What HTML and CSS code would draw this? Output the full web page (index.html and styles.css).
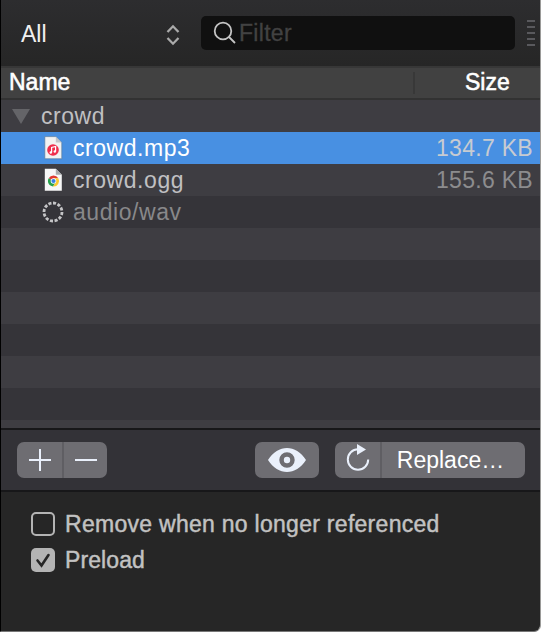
FILE: index.html
```html
<!DOCTYPE html>
<html lang="en">
<head>
<meta charset="utf-8">
<title>Sounds</title>
<link rel="stylesheet" href="styles.css">
</head>
<body>
<main class="window">
  <header class="topbar">
    <div class="scope"><span class="scope-label">All</span>
      <svg width="14" height="22" viewBox="0 0 14 22"><path d="M1.5 8 7 2.3 12.5 8M1.5 14 7 19.7 12.5 14"/></svg>
    </div>
    <div class="filter">
      <svg width="24" height="24" viewBox="0 0 24 24"><circle cx="10" cy="10" r="8.3"/><path d="m16 16 6 6"/></svg>
      <span class="placeholder">Filter</span>
    </div>
    <div class="grip"><i></i><i></i><i></i><i></i><i></i></div>
  </header>
  <div class="columns"><span class="col-name">Name</span><span class="col-size">Size</span></div>
  <section class="list">
    <div class="row group">
      <svg class="disclosure" width="18" height="15" viewBox="0 0 18 15"><path d="M0 0h18L9 15z"/></svg>
      <span class="name">crowd</span>
    </div>
    <div class="row selected">
      <svg class="file" width="20" height="24" viewBox="0 0 20 24">
        <path d="M1.8.6h11l6 6v16.2h-17z" fill="#f2f2f2" stroke="#587b9e" stroke-width=".7"/>
        <path d="m12.8.8 5.8 5.8h-5.8z" fill="#c2c6ca"/>
        <circle cx="10" cy="14" r="5.8" fill="#ef2e4c"/>
        <path d="M8.6 16.5v-5l4-1v5" fill="none" stroke="#fff" stroke-width="1.2"/><circle cx="7.8" cy="16.5" r="1.2" fill="#fff"/><circle cx="11.8" cy="15.5" r="1.2" fill="#fff"/>
      </svg>
      <span class="name">crowd.mp3</span><span class="size">134.7 KB</span>
    </div>
    <div class="row">
      <svg class="file" width="20" height="24" viewBox="0 0 20 24">
        <path d="M1.8.8h11l6 6v16h-17z" fill="#f7f7f7"/>
        <path d="m12.8.8 6 6h-6z" fill="#a9abad"/>
        <path d="M10.5 13 5.7 10.2a5.5 5.5 0 0 1 9.6 0h-4.8z" fill="#e03a30"/>
        <path d="M10.5 13 5.7 10.2A5.5 5.5 0 0 0 10 18.5L13 14z" fill="#27a14c"/>
        <path d="M10.5 10.2h4.8A5.5 5.5 0 0 1 10 18.5l3-4.5z" fill="#fbc92e"/>
        <circle cx="10.5" cy="13" r="2.8" fill="#fff"/><circle cx="10.5" cy="13" r="2.1" fill="#397fe2"/>
      </svg>
      <span class="name">crowd.ogg</span><span class="size">155.6 KB</span>
    </div>
    <div class="row missing">
      <svg class="file" width="20" height="22" viewBox="0 0 20 22"><circle cx="10" cy="11" r="9" pathLength="60" fill="none" stroke="#c4c4c6" stroke-width="2.8" stroke-dasharray="3.3 1.7"/></svg>
      <span class="name">audio/wav</span>
    </div>
    <div class="row"></div><div class="row"></div><div class="row"></div><div class="row"></div><div class="row"></div><div class="row"></div><div class="row"></div>
  </section>
  <div class="actions">
    <div class="button"><span class="part add"><svg width="22" height="22" viewBox="0 0 22 22"><path d="M0 11h22M11 0v22"/></svg></span><span class="part remove"><svg width="22" height="22" viewBox="0 0 22 22"><path d="M0 11h22"/></svg></span></div>
    <div class="button preview"><svg width="38" height="24" viewBox="0 0 38 24"><path fill="#eaf0fb" fill-rule="evenodd" d="M0 12C5 4 12 0 19 0s14 4 19 12c-5 8-12 12-19 12S5 20 0 12zM19 4.3a7.7 7.7 0 1 0 0 15.4 7.7 7.7 0 0 0 0-15.4z"/><circle cx="19" cy="12" r="3.2" fill="#eaf0fb"/></svg></div>
    <div class="button"><span class="part reload"><svg width="24" height="27" viewBox="0 0 24 27"><path d="M12 5.3A10.2 10.2 0 1 0 22.2 15.5" fill="none"/><path class="arrow" d="M11 0v11l9-5.5z"/></svg></span><span class="part replace">Replace…</span></div>
  </div>
  <section class="options">
    <div class="option"><span class="box"></span><span class="label-remove">Remove when no longer referenced</span></div>
    <div class="option"><span class="box checked"><svg width="24" height="24" viewBox="0 0 24 24"><path d="m6.5 12.5 4 5L17.5 7"/></svg></span><span class="label-preload">Preload</span></div>
  </section>
</main>
</body>
</html>
```

FILE: styles.css
```css
* { box-sizing: border-box; }
body { margin: 0; background: #fff; font: 23px/32px "Liberation Sans", Arial, sans-serif; }
svg { display: block; flex: none; overflow: visible; }
.window { width: 541px; height: 632px; overflow: hidden; background: #262626; border-left: 1px solid #000; border-right: 1px solid #9a9a98; border-bottom: 1px solid #777; border-bottom-right-radius: 7px; white-space: nowrap; }
.topbar { height: 66px; display: flex; align-items: center; background: linear-gradient(#2d2d2f, #262626); }
.scope { width: 200px; height: 66px; padding: 3px 21px 0 20px; display: flex; align-items: center; justify-content: space-between; color: #f0f0f0; }
.scope-label { padding-bottom: 2px; }
.scope svg { fill: none; stroke: #aaa; stroke-width: 2.3; }
.filter { width: 314px; height: 34px; border-radius: 5px; background: #101010; padding-left: 12px; display: flex; align-items: center; gap: 1px; }
.filter svg { fill: none; stroke: #c4c4c4; stroke-width: 1.8; }
.placeholder { color: #424242; letter-spacing: .3px; padding-left: 1px; -webkit-text-stroke: .3px; }
.grip { margin-left: 12px; display: grid; gap: 4px; }
.grip i { width: 8px; height: 2px; background: #59595d; }
.columns { height: 34px; border-top: 2px solid #373737; border-bottom: 2px solid #323232; background: #414141; display: flex; align-items: center; color: #fff; line-height: 30px; -webkit-text-stroke: .55px; }
.col-name { width: 412px; padding: 0 0 2px 8px; }
.col-size { height: 22px; line-height: 20px; border-left: 2px solid #383838; padding-left: 50px; }
.list { height: 328px; overflow: hidden; }
.row { height: 32px; line-height: 30px; display: flex; align-items: center; background: #3e3d42; padding: 0 7px 0 42px; color: #c0c0c2; }
.row:nth-child(even) { background: #353439; }
.row.group { padding-left: 11px; }
.disclosure { fill: #646468; margin-right: 11px; }
.file { margin-right: 10px; }
.name { letter-spacing: .55px; padding-bottom: 1px; }
.size { margin-left: auto; letter-spacing: .3px; padding-bottom: 1px; color: #8c8c8e; }
.row.selected { background: #4890e2; color: #fff; }
.selected .size { color: #c7cbd1; }
.missing .name { color: #88888a; }
.actions { height: 64px; border-top: 2px solid #171719; border-bottom: 2px solid #171719; background: #333237; padding: 0 15px 0 16px; display: flex; align-items: center; }
.button { height: 36px; border-radius: 7px; background: #6e6d72; display: flex; align-items: center; overflow: hidden; }
.button svg { stroke: #eaf0fb; stroke-width: 2; }
.preview { width: 64px; justify-content: center; margin-left: auto; margin-right: 16px; }
.preview svg { stroke: none; }
.part { height: 36px; display: flex; align-items: center; justify-content: center; }
.part + .part { border-left: 2px solid #5f5e63; }
.add { width: 45px; }
.remove { width: 45px; }
.reload { width: 45px; padding-bottom: 5px; }
.reload .arrow { fill: #eaf0fb; stroke: none; }
.replace { width: 145px; padding: 0 6px 1px 0; color: #fff; }
.options { padding: 16px 30px; display: grid; row-gap: 4px; color: #c2c2c2; }
.option { height: 32px; display: flex; align-items: center; gap: 10px; -webkit-text-stroke: .45px; }
.label-remove { letter-spacing: .28px; }
.label-preload { letter-spacing: .1px; }
.box { width: 24px; height: 24px; border: 2px solid #b4b4b4; border-radius: 5px; }
.checked { border: 0; background: #b4b4b4; }
.checked svg { fill: none; stroke: #262626; stroke-width: 2.6; stroke-linecap: round; }
```
